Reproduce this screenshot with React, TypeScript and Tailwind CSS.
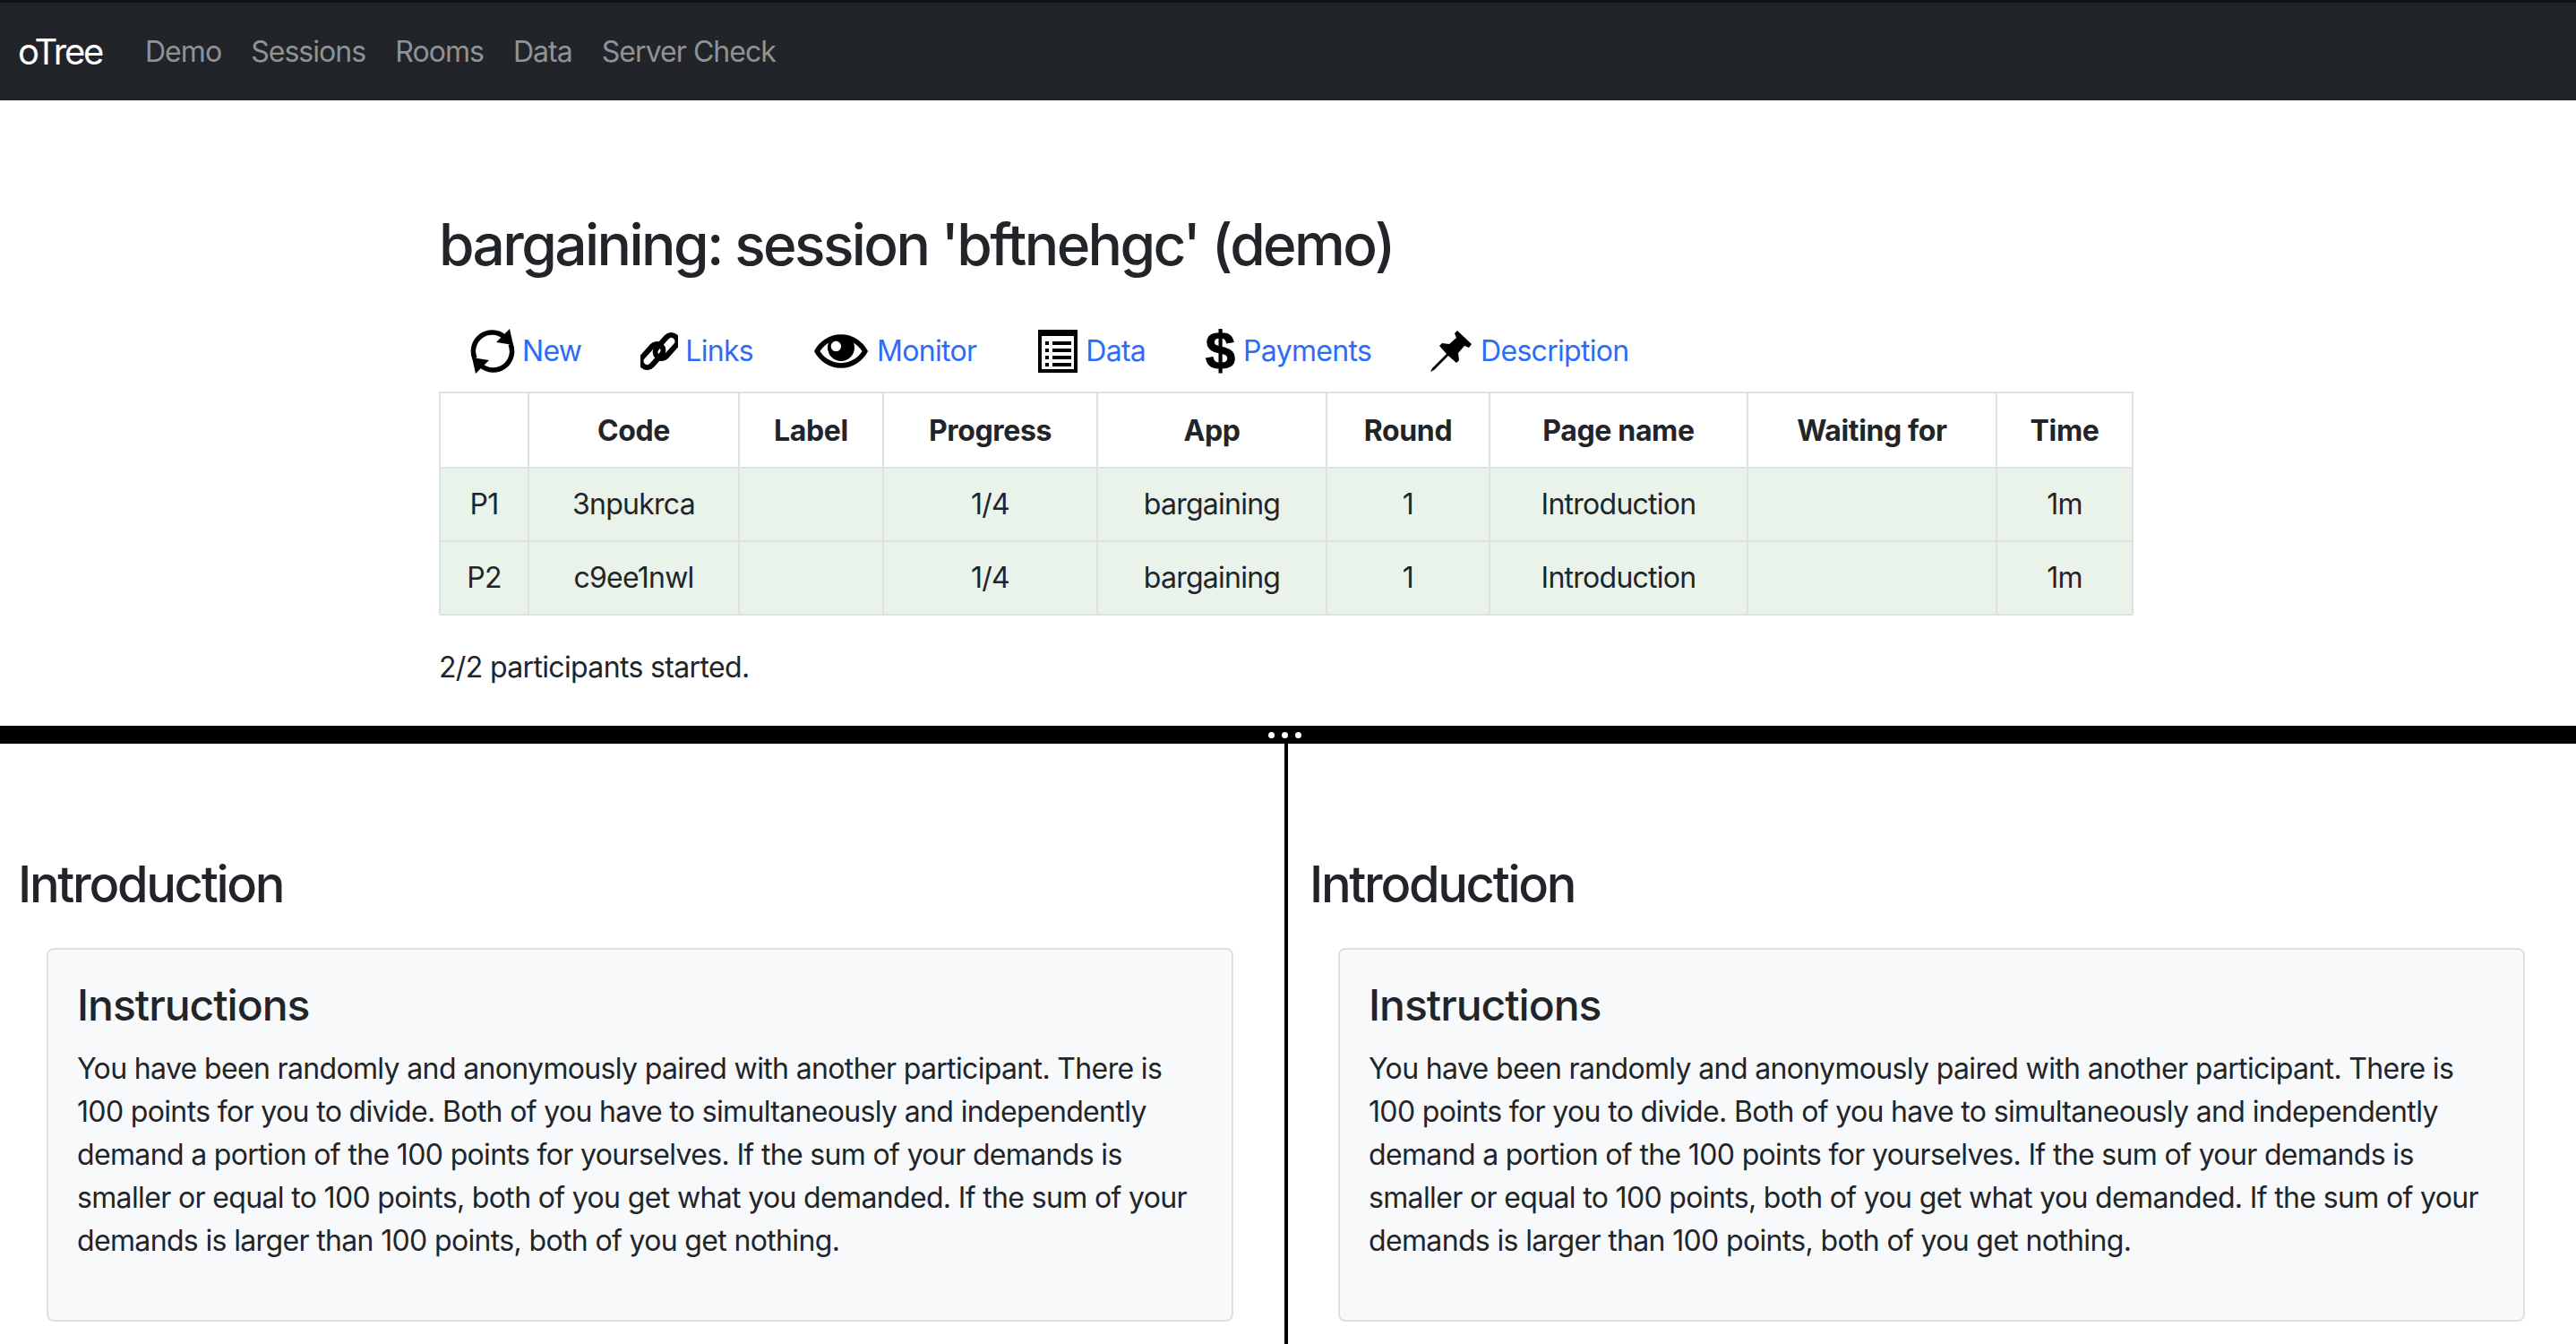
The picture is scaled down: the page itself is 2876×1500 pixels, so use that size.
import { ImEye } from "react-icons/im";

const NAV = ["Demo", "Sessions", "Rooms", "Data", "Server Check"];
const HEADERS = ["", "Code", "Label", "Progress", "App", "Round", "Page name", "Waiting for", "Time"];
const COL_WIDTHS = ["w-[99px]", "w-[235px]", "w-[161px]", "w-[239px]", "w-[256px]", "w-[182px]", "w-[288px]", "w-[278px]", "w-[152px]"];
const ROWS = [
  ["P1", "3npukrca", "", "1/4", "bargaining", "1", "Introduction", "", "1m"],
  ["P2", "c9ee1nwl", "", "1/4", "bargaining", "1", "Introduction", "", "1m"],
];
const LINES = [
  "You have been randomly and anonymously paired with another participant. There is",
  "100 points for you to divide. Both of you have to simultaneously and independently",
  "demand a portion of the 100 points for yourselves. If the sum of your demands is",
  "smaller or equal to 100 points, both of you get what you demanded. If the sum of your",
  "demands is larger than 100 points, both of you get nothing.",
];

function RefreshIcon() {
  return (
    <svg viewBox="0 0 50 50" className="h-[50px] w-[50px]">
      <g fill="none" stroke="#000" strokeWidth="5.5">
        <path d="M5 33A21 21 0 0 1 38 9" />
        <path d="M45 17A21 21 0 0 1 12 41" />
      </g>
      <path d="M44 0L48 18L29 15Z" />
      <path d="M6 50L2 32L21 35Z" />
    </svg>
  );
}

function LinkIcon() {
  return (
    <svg viewBox="0 0 42 46" className="h-[46px] w-[42px]">
      <g fill="none" stroke="#000" strokeWidth="6">
        <rect x="14" y="11" width="30" height="14" rx="7" transform="rotate(-48 29 18)" />
        <rect x="-2" y="21" width="30" height="14" rx="7" transform="rotate(-48 13 28)" />
      </g>
    </svg>
  );
}

function ListIcon() {
  return (
    <svg viewBox="0 0 44 48" className="h-[48px] w-[44px]">
      <rect x="2" y="2" width="40" height="44" fill="#fff" stroke="#000" strokeWidth="4" />
      <rect x="0" y="0" width="44" height="7" fill="#000" />
      {[13, 21, 29, 37].map((y) => (
        <g key={y} fill="#000">
          <rect x="8" y={y} width="4" height="4" />
          <rect x="16" y={y} width="21" height="4" />
        </g>
      ))}
    </svg>
  );
}

function PinIcon() {
  return (
    <svg viewBox="0 0 46 46" className="h-[46px] w-[46px]">
      <path d="M30 0L46 15L43 19L38 17L31 25L32 33L29 36L20 28L4 44L0 46L2 42L18 26L10 17L13 14L21 15L29 8L27 3Z" />
    </svg>
  );
}

const TOOLS = [
  { label: "New", icon: <RefreshIcon />, w: "w-[50px] mr-[8px]" },
  { label: "Links", icon: <LinkIcon />, w: "w-[42px] mr-[8px]" },
  { label: "Monitor", icon: <ImEye size={60} />, w: "w-[60px] ml-[2px] mr-[10px]" },
  { label: "Data", icon: <ListIcon />, w: "w-[44px] ml-[3px] mr-[9px]" },
  {
    label: "Payments",
    icon: <span className="font-['Liberation_Sans',sans-serif] text-[60px] leading-[52px] font-bold [-webkit-text-stroke:1px_black]">$</span>,
    w: "w-[34px] mr-[9px]",
  },
  { label: "Description", icon: <PinIcon />, w: "w-[46px] mr-[10px]" },
];

function Pane({ className }: { className: string }) {
  return (
    <div className={className}>
      <h2 className="pl-[20px] pt-[124px] text-[56px] leading-[67px] font-medium tracking-[-2.3px]">Introduction</h2>
      <div className="mt-[37px] ml-[52px] h-[417px] w-[1325px] rounded-[8px] border-2 border-[#dfdfdf] bg-[#f8f9fa] pl-[32px] pt-[33px]">
        <h4 className="text-[48px] leading-[58px] font-medium tracking-[-1px]">Instructions</h4>
        <p className="mt-[18px] text-[32px] leading-[48px] whitespace-nowrap tracking-[-0.65px]">
          {LINES.map((l) => (
            <span key={l} className="block">{l}</span>
          ))}
        </p>
      </div>
    </div>
  );
}

export default function App() {
  return (
    <div className="h-[1500px] overflow-hidden bg-white text-[#212529] font-['Inter',sans-serif] text-[32px] tracking-[-0.7px]">
      {/* Navbar */}
      <nav className="flex h-[112px] items-center border-t-[3px] border-[#111315] bg-[#212529] pl-[20px]">
        <span className="mr-[48px] text-[40px] text-white tracking-[-2.3px]">oTree</span>
        <div className="flex gap-[33px] text-[#909396] tracking-[-0.95px]">
          {NAV.map((n) => (
            <span key={n}>{n}</span>
          ))}
        </div>
      </nav>

      {/* Session panel */}
      <div className="h-[698px] pl-[490px]">
        <h2 className="pt-[122px] text-[64px] leading-[77px] font-medium tracking-[-2.6px]">
          bargaining: session 'bftnehgc' (demo)
        </h2>
        <div className="mt-[49px] flex h-[64px] items-center pl-[35px] gap-[66px] text-[#2c6cf6]">
          {TOOLS.map((t) => (
            <a key={t.label} className="flex items-center">
              <span className={`flex justify-center text-black ${t.w}`}>{t.icon}</span>
              <span>{t.label}</span>
            </a>
          ))}
        </div>
        <table className="mt-[13px] table-fixed border-collapse text-center tracking-[-0.75px]">
          <thead>
            <tr className="h-[84px]">
              {HEADERS.map((h, i) => (
                <th key={i} className={`border-2 border-[#dee2e6] pt-[2px] font-bold tracking-[-0.35px] ${COL_WIDTHS[i]}`}>{h}</th>
              ))}
            </tr>
          </thead>
          <tbody>
            {ROWS.map((r) => (
              <tr key={r[0]} className="h-[82px] bg-[#e9f3ea]">
                {r.map((c, i) => (
                  <td key={i} className="border-2 border-[#dee2e6]">{c}</td>
                ))}
              </tr>
            ))}
          </tbody>
        </table>
        <p className="mt-[34px] leading-[48px] tracking-[-0.65px]">2/2 participants started.</p>
      </div>

      {/* Horizontal splitter */}
      <div className="flex h-[20px] items-center justify-center gap-[8px] bg-black pr-[7px]">
        <span className="h-[7px] w-[7px] rounded-full bg-white" />
        <span className="h-[7px] w-[7px] rounded-full bg-white" />
        <span className="h-[7px] w-[7px] rounded-full bg-white" />
      </div>

      {/* Participant panes */}
      <div className="flex h-[670px]">
        <Pane className="w-[1434px] shrink-0" />
        <div className="w-[4px] shrink-0 bg-black" />
        <Pane className="flex-1 pl-[4px]" />
      </div>
    </div>
  );
}
